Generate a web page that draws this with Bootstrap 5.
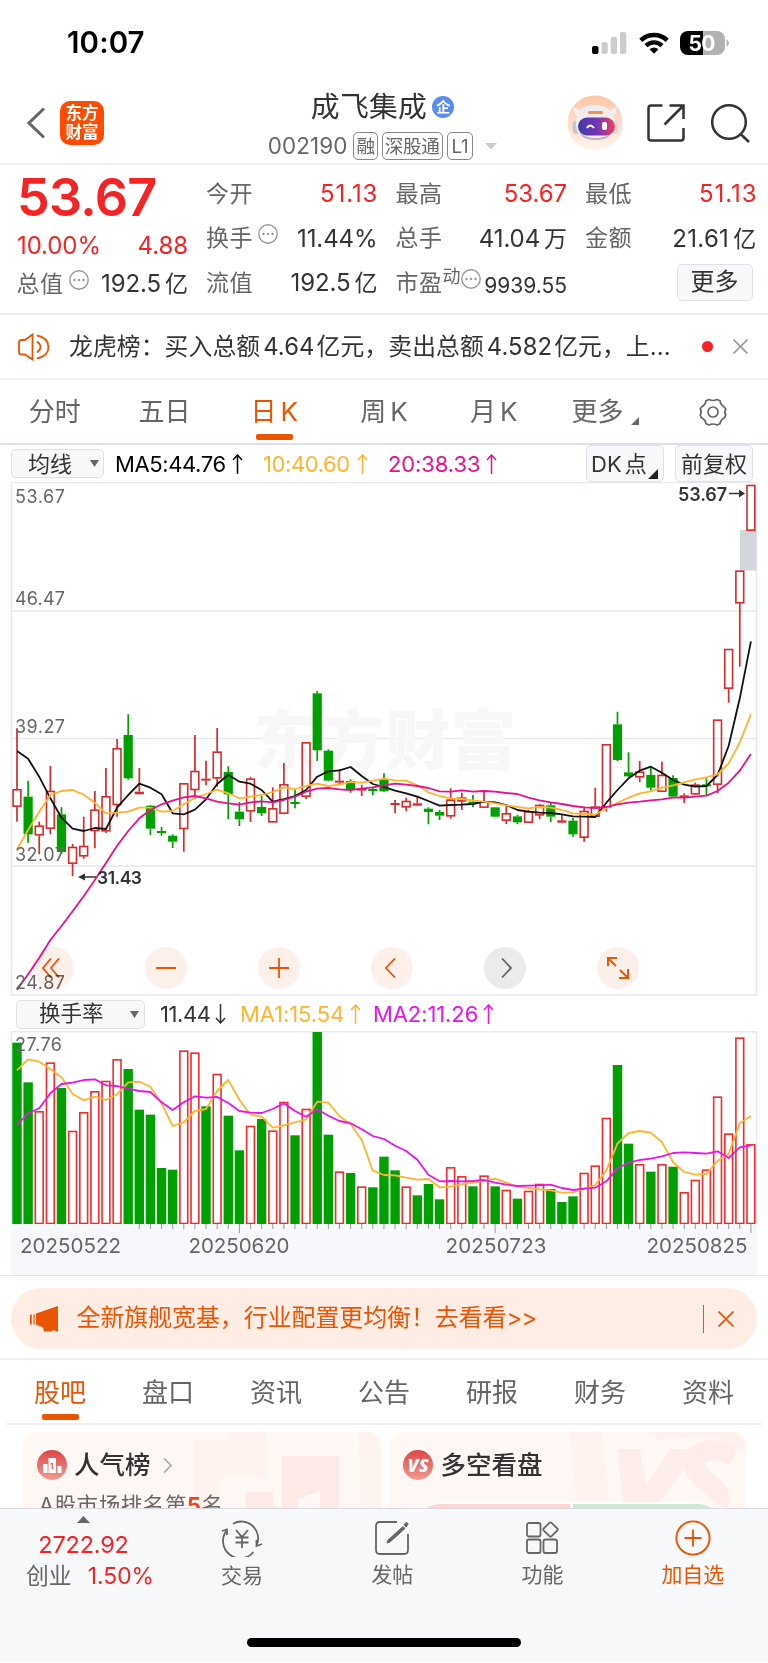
<!DOCTYPE html>
<html lang="zh-CN">
<head>
<meta charset="utf-8">
<meta name="viewport" content="width=device-width, initial-scale=1">
<title>成飞集成 002190</title>
<link href="https://cdn.jsdelivr.net/npm/bootstrap@5.3.0/dist/css/bootstrap.min.css" rel="stylesheet">
<style>
  :root { --brand:#ea5504; --up:#f52323; --ink:#333; --mute:#666; --rule:#ececf0; }
  body { width:768px; height:1663px; overflow:hidden; background:#fff; color:var(--ink);
         font-family:Inter,"Noto Sans CJK SC",sans-serif; line-height:1; }
  svg { display:block; flex:none; }
  .brand { color:var(--brand); } .up { color:var(--up); } .mute { color:var(--mute); }
  .statusbar { height:84px; padding:1px 39px 0 67px; font-size:29.5px; font-weight:600; color:#000; letter-spacing:.1px; }
  .topbar { height:81px; padding:0 17px 1px 27px; border-bottom:2px solid #eee; }
  .topbar .side { width:220px; }
  .topbar .mid { margin-right:13px; padding-top:4px; }
  .logo { width:44px; height:44px; border-radius:10px; background:#ff4a00; color:#fff; font-size:16.5px; font-weight:700; line-height:18.5px; margin-left:15px; margin-bottom:1px; }
  .stock-name { font-size:28.8px; letter-spacing:.3px; line-height:34px; }
  .ent { width:22px; height:22px; background:#5b8def; color:#fff; font-size:14px; font-weight:700; margin-left:5px; }
  .stock-code { font-size:22.4px; letter-spacing:.1px; margin-right:6px; }
  .tagbox { height:28px; border:1px solid #888; border-radius:5px; font-size:18.6px; padding:0 2px; margin-right:4px; letter-spacing:-.3px; }
  .quote { height:150px; padding:7px 11.5px 0 17px; display:grid; grid-template-columns:repeat(4,1fr); column-gap:18.6px; border-bottom:2px solid var(--rule); }
  .quote .line { height:44.5px; font-size:24px; letter-spacing:-.1px; white-space:nowrap; }
  .quote .k { color:var(--mute); font-size:23px; letter-spacing:.5px; margin-left:-.5px; }
  .quote .wide { letter-spacing:.9px; margin-right:-.9px; }
  .quote i { font-style:normal; font-size:23px; margin-left:4px; }
  .price { height:52px; font-size:52px; font-weight:600; letter-spacing:-.7px; }
  .chip { background:#f7f8fa; border:1px solid #dfe1e8; border-radius:5px; color:var(--ink); padding:0; display:flex; align-items:center; }
  .notice { height:65px; padding:0 20px 0 18px; border-bottom:2px solid #f2f2f2; font-size:23.8px; letter-spacing:.1px; }
  .notice .num { margin:0 2px 0 3px; letter-spacing:.1px; }
  .tabs { display:flex; font-size:26px; color:var(--mute); }
  .tabs > div { flex:1 1 0; position:relative; display:flex; justify-content:center; align-items:center; }
  .tabs .on { color:var(--brand); }
  .tabs .on::after { content:""; position:absolute; bottom:3px; width:37px; height:6px; border-radius:2px; background:var(--brand); }
  .period { height:65px; border-bottom:2px solid #dfe1e8; padding-top:1px; }
  .legendrow { font-size:22px; letter-spacing:-.4px; white-space:nowrap; }
  .lg { display:flex; align-items:center; justify-content:space-between; }
  .plot text { font-family:Inter,"Noto Sans CJK SC",sans-serif; }
  .pad { position:absolute; top:465px; width:42px; height:42px; border-radius:50%; background:#fdf0ea; mix-blend-mode:multiply; }
  .axis { height:51px; margin:0 11px; background:#f7f8fb; }
  .promo { height:61px; margin:12px 11px 9px; border-radius:30px; background:#feede4; font-size:23.9px; padding:0 23px 0 19px; }
  .subtabs { height:65px; margin:0 6px; border-bottom:2px solid #f0f0f0; padding-top:2px; }
  .cards { height:84px; padding:7px 22px 0 23px; gap:8px; overflow:hidden; }
  .tile { flex:1 1 0; border-radius:13px 13px 0 0; background:#fff8f5; position:relative; overflow:hidden; height:90px; padding:18px 0 0 14px; font-size:25.5px; font-weight:500; }
  .dock { height:154px; margin-top:-1px; background:#f6f8fa; border-top:1px solid #d8dadf; position:relative; font-size:21px; color:var(--mute); }
  .dock .cell { width:150.3px; }
  .home { position:absolute; left:247px; top:129px; width:274px; height:9px; border-radius:5px; background:#000; }
</style>
</head>
<body>
<div class="statusbar d-flex align-items-center justify-content-between">
  <span>10:07</span>
  <div class="d-flex align-items-center">
    <svg width="35" height="22" viewBox="0 0 35 22"><rect x="0" y="14" width="6.5" height="8" rx="2" fill="#000"/><g fill="#ccc"><rect x="9.5" y="10" width="6.3" height="12" rx="2"/><rect x="18.7" y="5" width="6.3" height="17" rx="2"/><rect x="28" y="0" width="6.3" height="22" rx="2"/></g></svg>
    <svg width="30" height="22" viewBox="0 0 30 22" style="margin-left:12px"><g fill="none" stroke="#000" stroke-width="4.4"><path d="M1.8 8.4a19 19 0 0 1 26.4 0"/><path d="M7 13.6a11.5 11.5 0 0 1 16 0"/></g><path d="M10.6 17.3a6.3 6.3 0 0 1 8.8 0L15 21.8z" fill="#000"/></svg>
    <svg width="49" height="24" viewBox="0 0 49 24" style="margin-left:11px"><path d="M8 0h15v24H8a8 8 0 0 1-8-8V8a8 8 0 0 1 8-8z" fill="#000"/><path d="M23 0h14a8 8 0 0 1 8 8v8a8 8 0 0 1-8 8H23z" fill="#b2b2b2"/><path d="M46.5 8q5 4 0 8z" fill="#b2b2b2"/><text x="22" y="19.5" text-anchor="middle" font-family="Inter" font-size="21" font-weight="700" fill="#fff" textLength="27">50</text></svg>
  </div>
</div>

<div class="topbar d-flex align-items-center justify-content-between">
  <div class="side d-flex align-items-center">
    <svg width="18" height="32" viewBox="0 0 18 32"><path d="M17 1.5 2 16l15 14.500" fill="none" stroke="#666" stroke-width="3"/></svg>
    <div class="logo d-flex flex-column align-items-center justify-content-center"><span>东方</span><span>财富</span></div>
  </div>
  <div class="mid d-flex flex-column align-items-center">
    <div class="d-flex align-items-center"><span class="stock-name">成飞集成</span><span class="ent rounded-circle d-flex align-items-center justify-content-center">企</span></div>
    <div class="d-flex align-items-center mute mt-2">
      <span class="stock-code">002190</span><span class="tagbox d-flex align-items-center">融</span><span class="tagbox d-flex align-items-center">深股通</span><span class="tagbox d-flex align-items-center px-1">L1</span>
      <svg width="12" height="7" class="ms-2"><path d="M0 0h12L6 6.500z" fill="#ccc"/></svg>
    </div>
  </div>
  <div class="side d-flex align-items-center justify-content-end">
    <svg width="56" height="56" viewBox="0 0 56 56">
      <defs><linearGradient id="sky" x2="0" y2="1"><stop stop-color="#fdc5a6"/><stop offset="1" stop-color="#fff5ef"/></linearGradient><linearGradient id="visor"><stop stop-color="#3f3aa5"/><stop offset=".55" stop-color="#7a35b5"/><stop offset="1" stop-color="#f0405a"/></linearGradient></defs>
      <circle cx="28" cy="28" r="27.500" fill="url(#sky)"/>
      <path d="M6 11q0 9 7 12l6-8q-9 1-13-4zM50 11q0 9-7 12l-6-8q9 1 13-4z" fill="#f3eeee"/>
      <rect x="5.500" y="26" width="9" height="13" rx="4" fill="#c9c5cc"/><rect x="42" y="26" width="9" height="13" rx="4" fill="#d9d5da"/>
      <path d="M28 10c14 0 20 9 20 19 0 11-8 16-20 16S9 40 9 29s5-19 19-19z" fill="#efedf0"/>
      <path d="M28 43c8 0 14-2 17-7-2 7-8 9-17 9s-14-3-16-9c3 4 8 7 16 7z" fill="#b9b4be"/>
      <rect x="21" y="16" width="15" height="3" rx="1.500" fill="#ee9352"/>
      <rect x="11" y="22.500" width="37" height="18" rx="9" fill="url(#visor)"/>
      <path d="M20 33q3-5 7 0" fill="none" stroke="#fff" stroke-width="2"/><rect x="35" y="27" width="5" height="8" rx="2" fill="#fff"/>
    </svg>
    <svg width="38" height="38" viewBox="0 0 38 38" style="margin-left:24px"><g fill="none" stroke="#333" stroke-width="2.500"><path d="M15.500 1.500H4Q1.500 1.500 1.500 4v30q0 2.500 2.500 2.500h30q2.500 0 2.500-2.500V24"/><path d="M22.500 1.500h14V15M36.500 1.500 17.500 20.500"/></g></svg>
    <svg width="40" height="40" viewBox="0 0 40 40" style="margin-left:26px"><g fill="none" stroke="#333" stroke-width="2.500"><circle cx="18" cy="19" r="16.800"/><path d="M29.500 31 38 39"/></g></svg>
  </div>
</div>

<section class="quote">
  <div>
    <div class="price up d-flex align-items-center">53.67</div>
    <div class="line up d-flex align-items-center justify-content-between"><span>10.00%</span><span>4.88</span></div>
    <div class="line d-flex align-items-center justify-content-between" style="height:31px"><span class="k">总值</span><svg style="margin:0 0 9px -7px" width="20" height="20"><use href="#more"/></svg><span>192.5<i>亿</i></span></div>
  </div>
  <div>
    <div class="line d-flex align-items-center justify-content-between"><span class="k">今开</span><span class="up wide">51.13</span></div>
    <div class="line d-flex align-items-center justify-content-between"><span class="k d-flex align-items-center">换手<svg style="margin:0 0 9px 5px" width="20" height="20"><use href="#more"/></svg></span><span>11.44%</span></div>
    <div class="line d-flex align-items-center justify-content-between"><span class="k">流值</span><span>192.5<i>亿</i></span></div>
  </div>
  <div>
    <div class="line d-flex align-items-center justify-content-between"><span class="k">最高</span><span class="up">53.67</span></div>
    <div class="line d-flex align-items-center justify-content-between"><span class="k">总手</span><span>41.04<i>万</i></span></div>
    <div class="line d-flex align-items-center"><span class="k">市盈</span><span class="mute" style="font-size:18px;margin-bottom:13px">动</span><svg style="margin:0 0 9px 1px" width="20" height="20"><use href="#more"/></svg><span class="mt-1 ms-auto" style="font-size:21px;letter-spacing:0">9939.55</span></div>
  </div>
  <div>
    <div class="line d-flex align-items-center justify-content-between"><span class="k">最低</span><span class="up wide">51.13</span></div>
    <div class="line d-flex align-items-center justify-content-between"><span class="k">金额</span><span style="letter-spacing:.3px">21.61<i>亿</i></span></div>
    <div class="line d-flex align-items-center justify-content-end"><button class="chip justify-content-center" style="width:76px;height:37px;margin-right:4px;margin-bottom:2px">更多</button></div>
  </div>
</section>

<section class="notice d-flex align-items-center">
  <svg width="32" height="28" viewBox="0 0 32 28"><g fill="none" stroke="#ea5504" stroke-width="1.800"><path d="M14.500 1.500v25L7 21.500H3.500q-2.500 0-2.500-2.500V9.500Q1 7 3.500 7H7z"/><path d="M19 8.500q7 5.500 0 11M19 2.500q11.500 2.500 11.500 11.500T19 25.500"/></g></svg>
  <span class="text-nowrap" style="margin-left:19px">龙虎榜：买入总额<span class="num">4.64</span>亿元，卖出总额<span class="num">4.582</span>亿元，上<span>...</span></span>
  <span class="ms-auto rounded-circle" style="width:11px;height:11px;background:var(--up)"></span>
  <svg width="15" height="15" style="margin-left:20px"><path d="M.5.5l14 14M14.500.5l-14 14" stroke="#999" stroke-width="1.600"/></svg>
</section>

<nav class="tabs period">
  <div>分时</div><div>五日</div><div class="on">日<span class="ps-1">K</span></div><div>周<span class="ps-1">K</span></div><div>月<span class="ps-1">K</span></div>
  <div>更多<svg width="8" height="8" style="margin:18px -4px 0 8px"><path d="M8 0v8H0z" fill="#666"/></svg></div>
  <div><svg width="30" height="30" viewBox="0 0 30 30"><g fill="none" stroke="#666" stroke-width="1.700" stroke-linejoin="round"><path d="M11 2.500q4 2 8 0l3 1.200q.4 4.400 4.500 6.500l1.300 2q-2 3 0 6l-1.300 2.600q-4 2-4.500 6l-3 1.200q-4-2-8 0l-3-1.200q-.4-4-4.500-6L2.200 18q2-3 0-6l1.300-2Q7.600 8 8 3.700z"/><circle cx="15" cy="15" r="5"/></g></svg></div>
</nav>

<div class="legendrow d-flex align-items-center" style="height:37px;padding-left:11px;padding-right:15px">
  <button class="chip" style="width:93px;height:29px;font-size:22px;padding-left:16px">均线<svg class="ms-auto me-1" width="9" height="7"><path d="M0 0h9L4.500 7z" fill="#666"/></svg></button>
  <span class="lg text-black" style="width:128px;margin-left:11px"><span>MA5:44.76</span><svg width="11" height="20"><use href="#arr" stroke="#000"/></svg></span>
  <span class="lg" style="width:105px;margin-left:20px;color:#ffb52e"><span>10:40.60</span><svg width="11" height="20"><use href="#arr" stroke="#ffb52e"/></svg></span>
  <span class="lg" style="width:109px;margin-left:20px;color:#e6118f"><span style="letter-spacing:-.1px">20:38.33</span><svg width="11" height="20"><use href="#arr" stroke="#e6118f"/></svg></span>
  <button class="chip ms-auto" style="width:78px;height:37px;font-size:22px;padding-left:4px">DK<span style="margin-left:3px">点</span><svg width="10" height="10" class="ms-auto" style="margin:20px 5px 0 0"><path d="M10 0v10H0z" fill="#222"/></svg></button>
  <button class="chip justify-content-center" style="width:78px;height:37px;margin-left:11px;font-size:22px">前复权</button>
</div>

<div class="position-relative">
  <svg class="plot" id="kline" width="768" height="514" viewBox="0 482 768 514"></svg>
  <div class="pad d-flex align-items-center justify-content-center" style="left:32px"><svg width="18" height="20" class="me-1"><path d="M9 .5 1 10l8 9.500M17 .5 9 10l8 9.500" fill="none" stroke="#ea5504" stroke-width="1.800"/></svg></div>
  <div class="pad d-flex align-items-center justify-content-center" style="left:145px"><svg width="20" height="20"><path d="M0 10h20" stroke="#ea5504" stroke-width="2"/></svg></div>
  <div class="pad d-flex align-items-center justify-content-center" style="left:258px"><svg width="20" height="20"><path d="M0 10h20M10 0v20" stroke="#ea5504" stroke-width="1.800"/></svg></div>
  <div class="pad d-flex align-items-center justify-content-center" style="left:371px"><svg width="11" height="20" class="me-1"><path d="M10 .5 1 10l9 9.500" fill="none" stroke="#ea5504" stroke-width="1.800"/></svg></div>
  <div class="pad d-flex align-items-center justify-content-center" style="left:484px;background:#ebebeb"><svg width="11" height="20" style="margin-left:2px"><path d="M1 .5 10 10l-9 9.500" fill="none" stroke="#666" stroke-width="1.800"/></svg></div>
  <div class="pad d-flex align-items-center justify-content-center" style="left:597px"><svg width="22" height="22"><path d="M1 9V1h9M1 1l8 8M21 12v9h-9M21 21l-8-8" fill="none" stroke="#ea5504" stroke-width="2"/></svg></div>
</div>

<div class="legendrow d-flex align-items-center" style="height:35px;padding-left:16px;padding-top:1px">
  <button class="chip" style="width:129px;height:29px;font-size:21.500px;padding-left:22px">换手率<svg class="ms-auto" width="9" height="7" style="margin-right:5px"><path d="M0 0h9L4.500 7z" fill="#666"/></svg></button>
  <span class="lg" style="width:66px;margin-left:15px"><span>11.44</span><svg width="11" height="20"><use href="#arr" stroke="#333" transform="rotate(180 5.500 10)"/></svg></span>
  <span class="lg" style="width:121px;margin-left:14px;color:#ffb52e"><span style="letter-spacing:-.1px">MA1:15.54</span><svg width="11" height="20"><use href="#arr" stroke="#ffb52e"/></svg></span>
  <span class="lg" style="width:121px;margin-left:12px;color:#e815e8"><span style="letter-spacing:-.1px">MA2:11.26</span><svg width="11" height="20"><use href="#arr" stroke="#e815e8"/></svg></span>
</div>
<svg class="plot" id="volume" width="768" height="193" viewBox="0 1031 768 193"></svg>
<div class="axis"><svg class="plot" id="dates" width="746" height="51" viewBox="11 1224 746 51"></svg></div>
<div style="border-top:1px solid #e3e3e8"></div>

<section class="promo brand d-flex align-items-center">
  <svg width="28" height="26" viewBox="0 0 28 26"><path d="M28 0v26l-5-2-1 1.500h-8l-1-4-7-3V7.500zM3.500 8.500h1.200v10H3.500zM0 8.500h1.800v10H0z" fill="#ea5504"/></svg>
  <span style="margin:0 0 1px 18.500px">全新旗舰宽基，行业配置更均衡！去看看<span style="letter-spacing:-.8px">&gt;&gt;</span></span>
  <span class="ms-auto" style="width:1.500px;height:28px;background:var(--brand)"></span>
  <svg width="16" height="16" style="margin-left:14px"><path d="M.5.5l15 15M15.500.5l-15 15" stroke="#ea5504" stroke-width="1.700"/></svg>
</section>
<div style="border-top:2px solid #f0f0f0;height:1px"></div>

<nav class="tabs subtabs"><div class="on">股吧</div><div>盘口</div><div>资讯</div><div>公告</div><div>研报</div><div>财务</div><div>资料</div></nav>

<section class="cards d-flex">
  <div class="tile">
    <svg class="position-absolute top-0 end-0" width="187" height="90" viewBox="0 0 187 90"><path d="M0 8h34V0h38v45H26v45H0z" fill="#fff2ef"/><path d="M164 0h15l8 8v82h-19z" fill="#fff3f0"/><path d="M88 24h57v66h-19V59l-22 8v23H52V60h27v15h9z" fill="#fde9e6"/></svg>
    <div class="d-flex align-items-center position-relative">
      <svg width="30" height="30"><defs><linearGradient id="rd" x2="0" y2="1"><stop stop-color="#dc4646"/><stop offset="1" stop-color="#f29a92"/></linearGradient></defs><circle cx="15" cy="15" r="15" fill="url(#rd)"/><path d="M6 14h4.500v9H6zM11.500 8h7.500v15h-7.500zM20.500 16h4v7h-4z" fill="#fff"/><text x="13" y="18.500" font-size="8" font-weight="700" fill="#dc5a55">1</text></svg>
      <span style="margin-left:7px">人气榜</span>
      <svg width="9" height="15" style="margin-left:12px"><path d="M1 .5 8 7.500l-7 7" fill="none" stroke="#aaa" stroke-width="1.700"/></svg>
    </div>
    <div class="mute position-relative text-nowrap fw-normal" style="font-size:21.500px;margin:15px 0 0 2px;letter-spacing:.6px">A股市场排名第<b style="color:#f4421c">5</b>名</div>
  </div>
  <div class="tile">
    <svg class="position-absolute top-0 end-0" width="176" height="90" viewBox="0 0 176 90"><path d="M0 0h32l9 90H8z" fill="#fff2ef"/><path d="M48 17h22l6 36 24-36h26L86 78v12H54z" fill="#fdeeeb"/><path d="M164 24q-26-12-36 0t8 25 12 23" fill="none" stroke="#fdecea" stroke-width="20"/><path d="M74 0h94l8 12v8L140 4 90 8z" fill="#fff1ee"/></svg>
    <div class="d-flex align-items-center position-relative">
      <svg width="30" height="30"><circle cx="15" cy="15" r="15" fill="url(#rd)"/><text x="14.500" y="21.500" text-anchor="middle" font-size="18" font-weight="800" font-style="italic" letter-spacing="-1" fill="#fff" textLength="20" font-family="Open Sans">VS</text></svg>
      <span style="margin-left:8px">多空看盘</span>
    </div>
    <div class="position-absolute d-flex" style="left:27px;top:70px;width:306px;height:30px;gap:3px;border-radius:24px 24px 0 0;overflow:hidden;border-top:2px solid #fff"><span style="width:154px;background:#fcd6d2"></span><span class="flex-fill" style="background:#cdebd3"></span></div>
  </div>
</section>

<footer class="dock d-flex">
  <div class="text-center" style="width:167px;padding-top:7px">
    <svg class="mx-auto" width="13" height="7"><path d="M6.500 0 13 7H0z" fill="#666"/></svg>
    <div class="up" style="font-size:23.500px;margin-top:10px;letter-spacing:-.2px">2722.92</div>
    <div class="d-flex" style="margin:8px 0 0 26px;font-size:22.800px;width:128px"><span>创业</span><span class="up ms-auto">1.50%</span></div>
  </div>
  <div class="cell d-flex flex-column align-items-center" style="padding-top:10px">
    <svg width="42" height="38" viewBox="-1 -1 42 38"><g fill="none" stroke="#666" stroke-width="1.800"><path d="M11 3.700A16.800 16.800 0 0 1 34.500 25.500M31.500 32A16.800 16.800 0 0 1 5 10M0 11l5-1.500V15M40 24l-5.500 2v-6"/><path d="m14 10 6 7 6-7M20 17v11M13.500 17.500h13M13.500 22.500h13"/></g></svg>
    <span style="margin-top:8px">交易</span>
  </div>
  <div class="cell d-flex flex-column align-items-center" style="padding-top:12px">
    <svg width="34" height="34" viewBox="0 0 34 34"><path d="M22 1H5Q1 1 1 5v24q0 4 4 4h24q4 0 4-4V13" fill="none" stroke="#666" stroke-width="1.800"/><path d="M13 19 28 5.500l2 2L15 21l-3 1zM29 4l2-2.500q2 0 2 2L31 6z" fill="#666" stroke="#666"/></svg>
    <span style="margin-top:9px">发帖</span>
  </div>
  <div class="cell d-flex flex-column align-items-center" style="padding-top:12px">
    <svg width="33" height="34" viewBox="0 0 33 34"><g fill="none" stroke="#666" stroke-width="1.800"><rect x="1" y="2" width="13.500" height="13.500" rx="2"/><rect x="1" y="18.500" width="13.500" height="13.500" rx="2"/><rect x="17.500" y="18.500" width="13.500" height="13.500" rx="2"/><rect x="19" y="3" width="11" height="11" rx="1.500" transform="rotate(45 24.500 8.500)"/></g></svg>
    <span style="margin-top:9px">功能</span>
  </div>
  <div class="cell d-flex flex-column align-items-center brand" style="padding-top:11px">
    <svg width="36" height="36"><g fill="none" stroke="#ea5504" stroke-width="1.900"><circle cx="18" cy="18" r="16.600"/><path d="M18 9.500v17M9.500 18h17"/></g></svg>
    <span style="margin-top:8px">加自选</span>
  </div>
  <div class="home"></div>
</footer>

<svg width="0" height="0" class="position-absolute">
  <symbol id="more" viewBox="0 0 20 20"><circle cx="10" cy="10" r="9.200" fill="none" stroke="#999" stroke-width="1.400"/><g fill="#999"><circle cx="5.500" cy="10" r="1.200"/><circle cx="10" cy="10" r="1.200"/><circle cx="14.500" cy="10" r="1.200"/></g></symbol>
  <path id="arr" d="M5.500 20V1M1 6l4.500-5L10 6" fill="none" stroke-width="1.500"/>
</svg>

<script>
// One row per trading day: direction, high, body top, body bottom, low (thirds of a pixel from the chart top), turnover bar top.
const days = `r745 928 980 1025 158g|g902 950 1063 1088 277|r1025 1037 1066 1123 364|r858 933 1046 1063 218|g982 1003 1116 1122 294|r1092 1101 1151 1188 423|r1010 1098 1129 1136 367|r933 989 1053 1105 304|r864 949 1054 1059 273|r777 805 975 1010 208|g703 765 895 899 237|r864 935 943 943 359g|g975 977 1046 1065 374|g1040 1053 1056 1067 534|g1063 1067 1085 1104 539|r909 910 1047 1115 182|r765 873 930 958 188|r842 896 901 916 349g|r744 815 895 920 252|g859 876 943 1018 377|g966 995 1018 1038 481|r890 896 994 1026 408|g948 981 1000 1008 387|r922 985 1027 1027 422|r849 913 1001 1003 336|g930 966 970 985 436|r787 787 950 957 357|g633 640 811 843 126|g808 812 902 904 434|r868 902 906 914 545|g898 903 928 938 549|r914 926 931 948 590|g920 927 930 946 592|g880 897 934 936 500|r960 969 974 1000 541g|r953 963 982 994 590|r950 970 977 979 616g|g982 986 996 1033 582|g990 996 1007 1020 628|r925 959 1009 1016 532|r938 953 964 990 559|g945 965 970 982 589|r930 964 983 983 557|g981 982 1010 1012 589|r975 1000 1022 1032 600|g1004 1009 1027 1033 626|r990 994 1028 1028 603|r973 975 1006 1018 582|g967 976 1010 1027 597|r1003 1021 1028 1030 636g|g1014 1022 1063 1070 619|r980 993 1073 1085 549|r923 980 1010 1012 527|r793 793 983 995 384|g695 733 840 843 225|g817 877 889 891 461|r843 875 892 907 523|g862 885 923 932 545|r845 885 935 936 523|g886 894 950 952 530|r940 946 953 969 607|r908 914 943 944 570|g895 913 917 945 539r|r719 719 914 940 320|r507 507 626 668 431|r272 272 370 560 143|r15 15 152 152 463`.split('|');
const ma = {
  m20:'1530,1483,1434,1380,1338,1294,1249,1200,1149,1097,1053,1015,990,973,962,952,948,955,965,970,974,967,964,967,960,950,935,926,924,928,930,926,922,916,911,914,918,924,934,935,931,935,933,935,939,942,953,961,967,972,978,982,984,981,973,968,965,961,958,953,953,950,947,933,908,872,822',
  m10:'1108,1050,995,945,933,930,944,968,1000,998,995,983,983,995,993,973,953,942,929,940,955,950,945,936,922,927,918,911,918,914,906,908,902,896,901,902,916,937,948,955,957,961,965,970,976,981,985,981,983,990,1000,1002,1004,985,968,953,940,934,923,916,907,898,892,883,850,787,703',
  m5:'813,836,890,955,1013,1046,1053,1044,1047,983,945,911,923,943,1000,1003,989,958,912,884,905,911,930,965,957,948,930,890,874,871,861,888,912,921,932,940,950,963,977,975,974,972,965,967,975,990,995,998,999,1003,1009,1010,1011,968,930,895,872,860,878,900,914,920,918,885,797,655,484',
  v1:'241,208,215,238,262,312,331,320,330,313,277,275,290,340,408,397,363,357,303,270,330,374,380,413,406,397,388,335,338,379,402,450,542,555,556,563,569,567,592,590,582,578,573,566,578,590,594,598,601,608,607,597,585,541,460,429,423,428,456,517,546,554,552,513,492,400,378',
  v2:'405,370,355,310,282,278,270,268,286,288,296,303,306,337,360,337,319,323,321,339,363,368,369,357,340,363,380,358,377,393,400,418,438,447,467,483,509,554,574,573,574,573,570,578,584,588,587,586,584,594,600,596,593,574,535,518,510,506,499,489,487,489,491,484,504,472,466'
};
const X = i => 17 + i * 11.12, K = y => 480 + y / 3, V = y => 990 + y / 3;
const line = (s, f, c) => { const p = s.split(','); return `<polyline fill="none" stroke="${c}" stroke-width="1.8" stroke-linejoin="round" points="${p.map((y, i) => X(i).toFixed(1) + ',' + f(+y).toFixed(1)).join(' ')}"/>`; };
const label = (x, y, w, t, size, extra = 'fill="#666"') => `<text x="${x}" y="${y}" font-size="${size}" textLength="${w}" ${extra}>${t}</text>`;
let k = `<path d="M11.500 996V482.500H756.500V996M11.500 611H756.500M11.500 738.500H756.500M11.500 866H756.500M11.500 995H756.500" fill="none" stroke="#e7e9f0" stroke-width="1.500"/>`;
k += `<text x="254" y="764" font-size="65" font-weight="900" textLength="262" fill="#f7f7f7">东方财富</text><rect x="740" y="530" width="16.500" height="40.500" fill="#d3d6db"/>`;
let v = `<path d="M11.500 1224V1031.700H756.500V1224" fill="none" stroke="#e7e9f0" stroke-width="1.500"/>`;
days.forEach((d, i) => {
  const red = d[0] === 'r', p = d.slice(1).split(' '), [h, t, b, l] = p.map(parseFloat), x = X(i);
  const c = red ? '#d52b2b' : '#00a000';
  const T = K(t), B = Math.max(K(b), T + 2);
  k += `<path d="M${x} ${K(h)}V${T}M${x} ${B}V${K(l)}" stroke="${c}" stroke-width="1.7"/>`;
  k += red && B - T > 3 ? `<rect x="${x - 3.9}" y="${T + .5}" width="7.8" height="${B - T - 1}" fill="none" stroke="${c}" stroke-width="1.6"/>`
                        : `<rect x="${x - 4.600}" y="${T}" width="9.200" height="${B - T}" fill="${c}"/>`;
  const y = V(parseFloat(p[4])), green = p[4].endsWith('g') || (!red && !p[4].endsWith('r'));
  v += green ? `<rect x="${x - 4.700}" y="${y}" width="9.400" height="${1224 - y}" fill="#00a000"/>`
             : `<rect x="${x - 3.900}" y="${y + .5}" width="7.800" height="${1223.500 - y - .5}" fill="#fff" stroke="#f32b2b" stroke-width="1.600"/>`;
});
k += line(ma.m5, K, '#111') + line(ma.m10, K, '#ffb52e') + line(ma.m20, K, '#e6118f');
[['53.67', 502.500], ['46.47', 605], ['39.27', 732.700], ['32.07', 860.500], ['24.87', 988.700]].forEach(a => k += label(15, a[1], 50, a[0], 18));
const dark = 'fill="#333" font-weight="600"';
k += label(97, 884, 45, '31.43', 17.500, dark) + label(678, 500.500, 49, '53.67', 18, dark);
k += `<path d="M96 877H84M729 493.500h12" stroke="#333" stroke-width="1.500"/><path d="M78 877l7-3.500v7zM745 493.500l-6-4v8z" fill="#333"/>`;
v += line(ma.v1, V, '#ffb52e') + line(ma.v2, V, '#e815e8') + label(15, 1050.500, 47, '27.76', 18);
let a = '';
for (let i = 11; i < 67; i++) a += `<path d="M${X(i)} 1224v${(i - 20) % 23 ? 5 : 9}" stroke="#999" stroke-width="1"/>`;
[['20250522', 20], ['20250620', 188.500], ['20250723', 445.500], ['20250825', 646.500]].forEach(t => a += label(t[1], 1253.300, 101, t[0], 20.500));
kline.innerHTML = k; volume.innerHTML = v; dates.innerHTML = a;
</script>
<script src="https://cdn.jsdelivr.net/npm/bootstrap@5.3.0/dist/js/bootstrap.bundle.min.js"></script>
</body>
</html>
